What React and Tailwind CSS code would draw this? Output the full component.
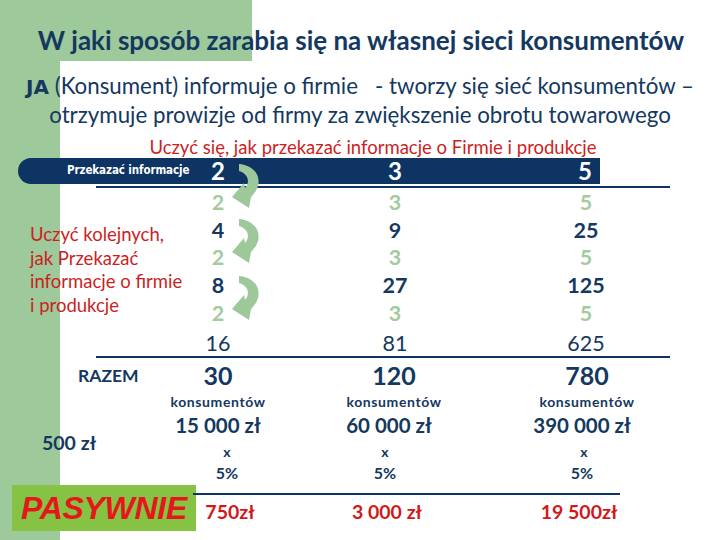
import React from "react";

const NAVY = "text-[#14385f]";

function Arrow({ top }) {
  return (
    <svg
      className="absolute left-[232px] w-[28px] h-[45px]"
      style={{ top }}
      viewBox="0 0 28 45"
    >
      <path
        d="M7 0 C 20 1, 29 10, 26 22 C 24 28, 21 31, 19 33 L 17 44 L 0 33 L 12 19 L 13 24 C 18 19, 17 10, 7 7 Z"
        fill="#9dc89a"
      />
    </svg>
  );
}

export default function App() {
  const nums = [
    ["2", "3", "5", "g"],
    ["4", "9", "25", "n"],
    ["2", "3", "5", "g"],
    ["8", "27", "125", "n"],
    ["2", "3", "5", "g"],
    ["16", "81", "625", "r"],
  ];
  return (
    <div className="relative w-[720px] h-[540px] bg-white overflow-hidden font-['Lato',sans-serif]">
      {/* backdrop */}
      <div className="absolute left-0 top-0 w-[252px] h-[61px] bg-[#9ec99a]" />
      <div className="absolute left-0 top-0 w-[60px] h-[540px] bg-[#9ec99a]" />
      <div className="absolute left-[60px] top-[61px] w-[40px] h-[40px] bg-white rounded-tl-[16px]" />

      <div className="relative flex flex-col">
        <h1 className={`mt-[22px] leading-[36px] text-center text-[26px] font-bold ${NAVY} pl-[2px]`}>
          W jaki sposób zarabia się na własnej sieci konsumentów
        </h1>
        <p className={`mt-[14px] leading-[28px] text-center text-[22.3px] ${NAVY}`}>
          <span className="font-['DejaVu_Sans',sans-serif] font-bold text-[20px]">JA</span> (Konsument) informuje o firmie&nbsp;&nbsp; - tworzy się sieć konsumentów –
          <br />
          otrzymuje prowizje od firmy za zwiększenie obrotu towarowego
        </p>
        <div className="mt-[8px] h-[20px] leading-[20px] text-[18.5px] text-[#cc1f1f] pl-[26px] text-center">
          Uczyć się, jak przekazać informacje o Firmie i produkcje
        </div>

        {/* table top */}
        <div className="relative mt-[1px]">
          <div className="ml-[18px] w-[582px] h-[26px] bg-[#0d3462] rounded-l-full flex items-center text-white font-bold">
            <div className="w-[178px] pl-[49px] text-[11.5px] font-['DejaVu_Sans_Condensed','DejaVu_Sans',sans-serif] tracking-[-0.1px]">
              Przekazać informacje
            </div>
            <div className="w-[44px] text-center text-[24px]">2</div>
            <div className="w-[22px]" />
            <div className="w-[266px] text-center text-[24px]">3</div>
            <div className="w-[72px] text-right pr-[8px] text-[24px]">5</div>
          </div>
          <div className="mt-[2px] ml-[96px] w-[574px] h-[2px] bg-[#0d3462]" />
          <div className="flex">
            <div className="w-[196px] pl-[30px] pt-[35px] text-[18.5px] leading-[23.5px] text-[#cc1f1f] whitespace-nowrap">
              Uczyć kolejnych,
              <br />
              jak Przekazać
              <br />
              informacje o firmie
              <br />
              i produkcje
            </div>
            <div className="flex flex-col">
              {nums.map((r, i) => (
                <div
                  key={i}
                  className={`h-[27.8px] flex items-center text-[21.5px] ${
                    r[3] === "g" ? "text-[#a3cb9e] font-bold" : r[3] === "n" ? `${NAVY} font-bold` : `${NAVY} pt-[5px]`
                  }`}
                >
                  <div className="w-[44px] text-center">{r[0]}</div>
                  <div className="w-[22px]" />
                  <div className="w-[266px] text-center">{r[1]}</div>
                  <div className="w-[116px] text-center">{r[2]}</div>
                </div>
              ))}
            </div>
          </div>
          <Arrow top={6} />
          <Arrow top={61} />
          <Arrow top={118} />
        </div>
        <div className="mt-[1px] ml-[96px] w-[574px] h-[2px] bg-[#0d3462]" />

        {/* totals */}
        <div className={`flex ${NAVY}`}>
          <div className="w-[168px] flex flex-col font-bold">
            <div className="h-[36px] flex items-center pl-[78px] text-[17.5px]">RAZEM</div>
            <div className="mt-[37px] h-[24px] leading-[24px] pl-[42px] text-[19.5px]">500 zł</div>
          </div>
          <div className="flex flex-col font-bold">
            <div className="h-[36px] flex items-center text-[25px]">
              <div className="w-[100px] text-center">30</div>
              <div className="w-[252px] text-center">120</div>
              <div className="w-[134px] text-center">780</div>
            </div>
            <div className="h-[16px] flex items-center text-[14px] tracking-[0.6px]">
              <div className="w-[100px] text-center">konsumentów</div>
              <div className="w-[252px] text-center">konsumentów</div>
              <div className="w-[134px] text-center">konsumentów</div>
            </div>
            <div className="h-[32px] flex items-center text-[20.5px]">
              <div className="w-[100px] text-center">15 000 zł</div>
              <div className="w-[252px] text-center pr-[10px]">60 000 zł</div>
              <div className="w-[134px] text-center pr-[10px]">390 000 zł</div>
            </div>
            <div className="h-[20px] flex items-center text-[14px]">
              <div className="w-[100px] text-center pl-[18px]">x</div>
              <div className="w-[252px] text-center pr-[18px]">x</div>
              <div className="w-[134px] text-center pr-[6px]">x</div>
            </div>
            <div className="h-[23px] flex items-center text-[16px]">
              <div className="w-[100px] text-center pl-[18px]">5%</div>
              <div className="w-[252px] text-center pr-[18px]">5%</div>
              <div className="w-[134px] text-center pr-[10px]">5%</div>
            </div>
          </div>
        </div>

        {/* bottom */}
        <div className="flex">
          <div className="ml-[12px] w-[184px] h-[46px] bg-[#86c244] flex items-center justify-center">
            <span className="font-['Liberation_Sans',sans-serif] font-bold italic text-[32px] text-[#e3181b] tracking-[-0.3px]">
              PASYWNIE
            </span>
          </div>
          <div className="flex flex-col">
            <div className="mt-[8px] -ml-[3px] w-[427px] h-[2px] bg-[#0d3462]" />
            <div className="h-[34px] flex items-center font-bold text-[19.5px] text-[#d3181b]">
              <div className="w-[68px] text-center">750zł</div>
              <div className="w-[246px] text-center">3 000 zł</div>
              <div className="w-[138px] text-center">19 500zł</div>
            </div>
          </div>
        </div>
      </div>
    </div>
  );
}
